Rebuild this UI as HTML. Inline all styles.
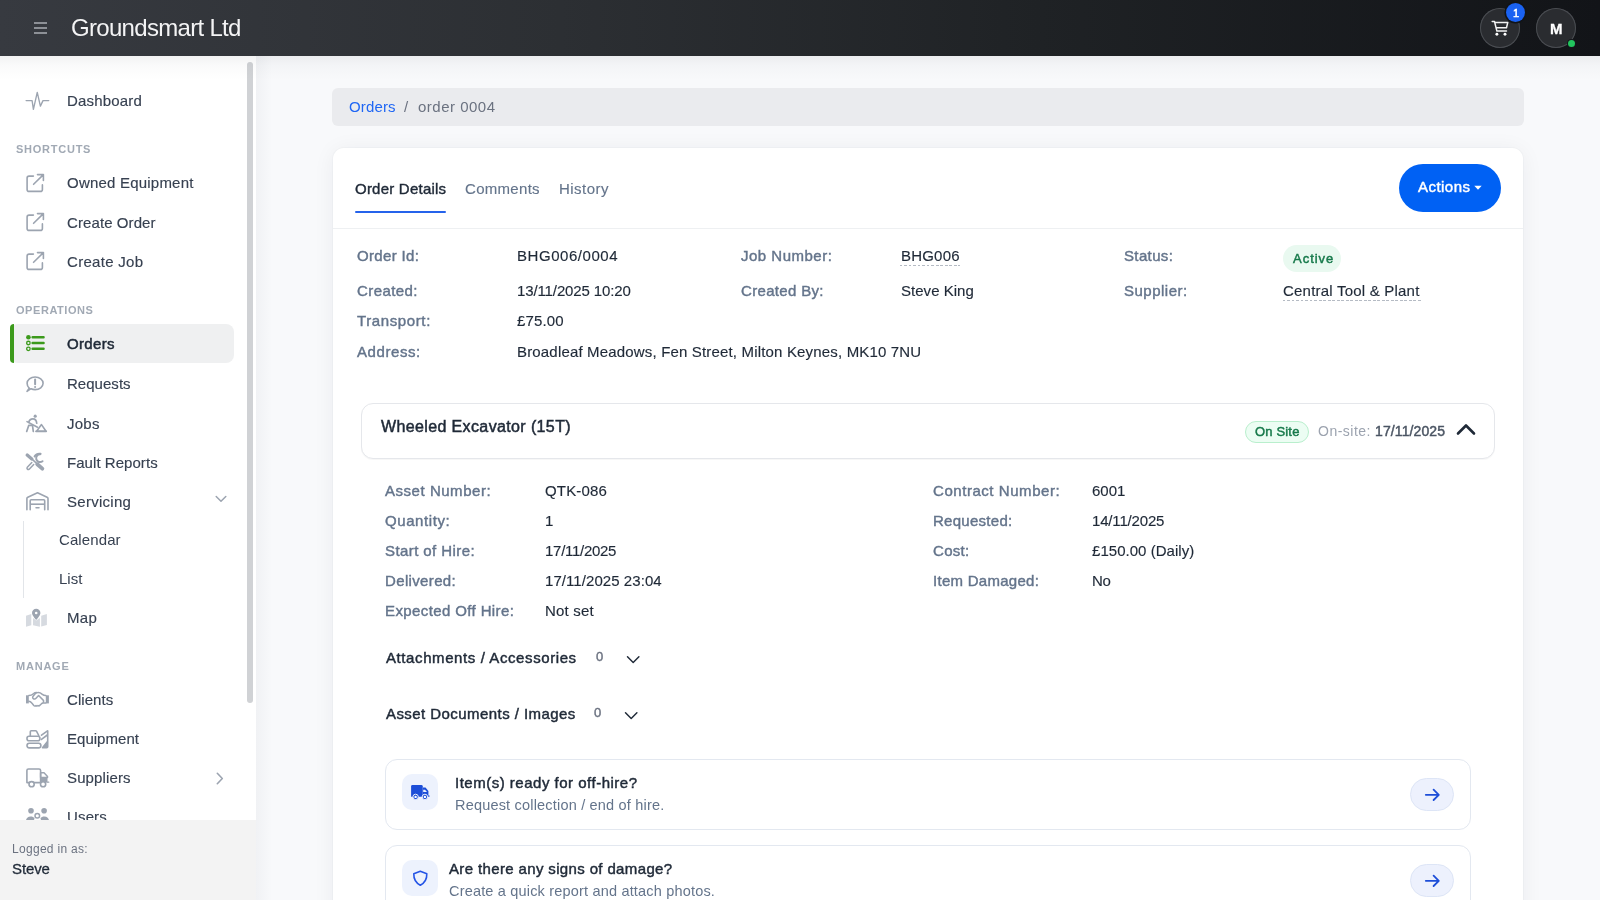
<!DOCTYPE html>
<html><head><meta charset="utf-8"><title>Order 0004</title>
<style>
html,body{margin:0;padding:0;width:1600px;height:900px;overflow:hidden;background:#f8f9fb;font-family:"Liberation Sans",sans-serif;}
.a{position:absolute;}
.t{position:absolute;white-space:nowrap;will-change:transform;}
</style></head><body>
<div class="a" style="left:0px;top:0px;width:1600px;height:56px;background:linear-gradient(90deg,#373a40 0%,#2c2f33 35%,#1f2225 65%,#121418 100%);"></div>
<div class="a" style="left:34px;top:22.4px;width:13px;height:1.3px;background:#8d9096;"></div>
<div class="a" style="left:34px;top:27.4px;width:13px;height:1.3px;background:#8d9096;"></div>
<div class="a" style="left:34px;top:32.4px;width:13px;height:1.3px;background:#8d9096;"></div>
<div class="t" style="left:70.60px;top:13px;font-size:24px;line-height:30px;color:#f4f4f5;letter-spacing:-0.693px;">Groundsmart Ltd</div>
<div class="a" style="left:1480px;top:8px;width:40px;height:40px;border-radius:50%;background:#2a2c30;box-shadow:inset 0 0 0 1px #4a4d52;"></div>
<svg class="a" style="left:1486px;top:14px;" width="28" height="28" viewBox="0 0 28 28" fill="none"><path d="M6.2 7.5H8.5L10.9 17.1H20.5M9 8.4H21.8L20.5 13.7H10" stroke="#f2f2f2" stroke-width="1.5" stroke-linecap="round" stroke-linejoin="round"/><circle cx="10.9" cy="20.2" r="1.45" fill="#fff"/><circle cx="19" cy="20.2" r="1.45" fill="#fff"/></svg>
<div class="a" style="left:1506px;top:2.5px;width:19px;height:19px;border-radius:50%;background:#1a62f2;box-shadow:0 0 0 1.5px #111418;"></div>
<div class="t" style="left:1512.50px;top:6px;font-size:11px;line-height:14px;color:#fff;-webkit-text-stroke:0.5px #fff;">1</div>
<div class="a" style="left:1536px;top:8px;width:40px;height:40px;border-radius:50%;background:#2a2c30;box-shadow:inset 0 0 0 1px #4a4d52;"></div>
<div class="t" style="left:1549.60px;top:19px;font-size:15px;line-height:20px;color:#fff;font-weight:700;-webkit-text-stroke:0.3px #fff;">M</div>
<div class="a" style="left:1567.5px;top:39.5px;width:7px;height:7px;border-radius:50%;background:#22c55e;box-shadow:0 0 0 1px #15181c;"></div>
<div class="a" style="left:0px;top:56px;width:256px;height:764px;background:#fff;"></div>
<div class="a" style="left:256px;top:56px;width:16px;height:844px;background:linear-gradient(90deg,rgba(30,40,60,0.035),rgba(30,40,60,0));"></div>
<div class="a" style="left:247px;top:62px;width:6px;height:641px;border-radius:3px;background:#d0d2d5;"></div>
<div class="a" style="left:10px;top:324px;width:224px;height:39px;border-radius:8px;background:#eff0f1;"></div>
<div class="a" style="left:10px;top:324px;width:4px;height:39px;border-radius:8px 0 0 8px;background:#3c9a1c;"></div>
<div class="a" style="left:23px;top:521px;width:1px;height:77px;background:#e2e5e9;"></div>
<div class="t" style="left:67.40px;top:91px;font-size:15px;line-height:20px;color:#374151;-webkit-text-stroke:0.15px #374151;letter-spacing:0.188px;">Dashboard</div>
<div class="t" style="left:67.40px;top:173px;font-size:15px;line-height:20px;color:#374151;-webkit-text-stroke:0.15px #374151;letter-spacing:0.214px;">Owned Equipment</div>
<div class="t" style="left:67.40px;top:213px;font-size:15px;line-height:20px;color:#374151;-webkit-text-stroke:0.15px #374151;letter-spacing:0.091px;">Create Order</div>
<div class="t" style="left:67.40px;top:252px;font-size:15px;line-height:20px;color:#374151;-webkit-text-stroke:0.15px #374151;letter-spacing:0.300px;">Create Job</div>
<div class="t" style="left:67.40px;top:374px;font-size:15px;line-height:20px;color:#374151;-webkit-text-stroke:0.15px #374151;letter-spacing:0.029px;">Requests</div>
<div class="t" style="left:67.40px;top:414px;font-size:15px;line-height:20px;color:#374151;-webkit-text-stroke:0.15px #374151;letter-spacing:0.233px;">Jobs</div>
<div class="t" style="left:67.40px;top:453px;font-size:15px;line-height:20px;color:#374151;-webkit-text-stroke:0.15px #374151;letter-spacing:0.050px;">Fault Reports</div>
<div class="t" style="left:67.40px;top:492px;font-size:15px;line-height:20px;color:#374151;-webkit-text-stroke:0.15px #374151;letter-spacing:0.275px;">Servicing</div>
<div class="t" style="left:67.40px;top:608px;font-size:15px;line-height:20px;color:#374151;-webkit-text-stroke:0.15px #374151;letter-spacing:0.300px;">Map</div>
<div class="t" style="left:67.40px;top:690px;font-size:15px;line-height:20px;color:#374151;-webkit-text-stroke:0.15px #374151;letter-spacing:0.067px;">Clients</div>
<div class="t" style="left:67.40px;top:729px;font-size:15px;line-height:20px;color:#374151;-webkit-text-stroke:0.15px #374151;letter-spacing:0.025px;">Equipment</div>
<div class="t" style="left:67.40px;top:768px;font-size:15px;line-height:20px;color:#374151;-webkit-text-stroke:0.15px #374151;letter-spacing:0.125px;">Suppliers</div>
<div class="t" style="left:67.40px;top:807px;font-size:15px;line-height:20px;color:#374151;-webkit-text-stroke:0.15px #374151;letter-spacing:0.150px;">Users</div>
<div class="t" style="left:67.40px;top:334px;font-size:15px;line-height:20px;color:#1f2937;-webkit-text-stroke:0.5px #1f2937;letter-spacing:0.340px;">Orders</div>
<div class="t" style="left:59.10px;top:530px;font-size:15px;line-height:20px;color:#374151;letter-spacing:0.100px;">Calendar</div>
<div class="t" style="left:59.10px;top:569px;font-size:15px;line-height:20px;color:#374151;">List</div>
<div class="t" style="left:16.30px;top:142px;font-size:11px;line-height:14px;color:#a1a9b4;font-weight:700;letter-spacing:0.750px;">SHORTCUTS</div>
<div class="t" style="left:16.30px;top:303px;font-size:11px;line-height:14px;color:#a1a9b4;font-weight:700;letter-spacing:0.556px;">OPERATIONS</div>
<div class="t" style="left:16.30px;top:659px;font-size:11px;line-height:14px;color:#a1a9b4;font-weight:700;letter-spacing:0.780px;">MANAGE</div>
<svg class="a" style="left:24px;top:90px;" width="26" height="22" viewBox="0 0 26 22" fill="none"><path d="M2.1 10.6H8.1L9.4 19.3L13.25 2.4L16.4 16.1L19 10.6H24.75" stroke="#9ca4b0" stroke-width="1.35" stroke-linecap="round" stroke-linejoin="round"/></svg>
<svg class="a" style="left:22px;top:170px;" width="26" height="26" viewBox="0 0 26 26" fill="none"><path d="M11.4 6.1H7.1a2 2 0 0 0-2 2V19.4a2 2 0 0 0 2 2H18.4a2 2 0 0 0 2-2V14.9" stroke="#9ca4b0" stroke-width="1.6" stroke-linecap="round" stroke-linejoin="round"/><path d="M11.6 14.3L21.4 4.6M15.5 4.6H21.4V10.5" stroke="#9ca4b0" stroke-width="1.6" stroke-linecap="round" stroke-linejoin="round"/></svg>
<svg class="a" style="left:22px;top:209px;" width="26" height="26" viewBox="0 0 26 26" fill="none"><path d="M11.4 6.1H7.1a2 2 0 0 0-2 2V19.4a2 2 0 0 0 2 2H18.4a2 2 0 0 0 2-2V14.9" stroke="#9ca4b0" stroke-width="1.6" stroke-linecap="round" stroke-linejoin="round"/><path d="M11.6 14.3L21.4 4.6M15.5 4.6H21.4V10.5" stroke="#9ca4b0" stroke-width="1.6" stroke-linecap="round" stroke-linejoin="round"/></svg>
<svg class="a" style="left:22px;top:248px;" width="26" height="26" viewBox="0 0 26 26" fill="none"><path d="M11.4 6.1H7.1a2 2 0 0 0-2 2V19.4a2 2 0 0 0 2 2H18.4a2 2 0 0 0 2-2V14.9" stroke="#9ca4b0" stroke-width="1.6" stroke-linecap="round" stroke-linejoin="round"/><path d="M11.6 14.3L21.4 4.6M15.5 4.6H21.4V10.5" stroke="#9ca4b0" stroke-width="1.6" stroke-linecap="round" stroke-linejoin="round"/></svg>
<svg class="a" style="left:22px;top:330px;" width="26" height="26" viewBox="0 0 26 26" fill="none"><circle cx="6.4" cy="7.3" r="2.3" fill="#3c9a1c"/><circle cx="6.4" cy="13" r="1.75" stroke="#3c9a1c" stroke-width="1.3"/><circle cx="6.4" cy="18.8" r="1.75" stroke="#3c9a1c" stroke-width="1.3"/><path d="M10.6 7.3H21.6M10.6 13H21.6M10.6 18.8H21.6" stroke="#3c9a1c" stroke-width="2.4" stroke-linecap="round"/></svg>
<svg class="a" style="left:22px;top:372px;" width="26" height="24" viewBox="0 0 26 24" fill="none"><path d="M7.2 16.2C5.8 14.9 5.1 13.2 5.1 11.3c0-3.5 3.6-6.3 8-6.3s8 2.8 8 6.3-3.6 6.3-8 6.3c-1.5 0-2.9-.3-4.1-.9L5 19.4z" stroke="#9ca4b0" stroke-width="1.6" stroke-linejoin="round"/><path d="M13.1 7.6V12.2" stroke="#9ca4b0" stroke-width="2" stroke-linecap="round"/><circle cx="13.1" cy="15" r="1.05" fill="#9ca4b0"/></svg>
<svg class="a" style="left:22px;top:410px;" width="26" height="26" viewBox="0 0 26 26" fill="none"><circle cx="13.2" cy="6.2" r="1.6" fill="#9ca4b0"/><path d="M5 11.6L15.5 17.2" stroke="#9ca4b0" stroke-width="1.6" stroke-linecap="round"/><path d="M6.8 12.3C7.3 10 9 8.8 10.9 8.8c2.2 0 3.6 1.6 3.8 4.4" stroke="#9ca4b0" stroke-width="1.7" stroke-linecap="round"/><path d="M4.7 21.5L6.8 15.3H10.5L11.3 21.5" stroke="#9ca4b0" stroke-width="1.7" stroke-linecap="round" stroke-linejoin="round"/><path d="M14.6 21.2L19.5 14.6L24 21.2z" stroke="#9ca4b0" stroke-width="1.6" stroke-linejoin="round"/><path d="M14 21.3H24.2" stroke="#9ca4b0" stroke-width="1.8" stroke-linecap="round"/></svg>
<svg class="a" style="left:22px;top:450px;" width="26" height="24" viewBox="0 0 26 24" fill="none"><path d="M5.2 5L9.8 8.9" stroke="#9ca4b0" stroke-width="3.3" stroke-linecap="round"/><path d="M9.8 8.9L14.6 13.4" stroke="#9ca4b0" stroke-width="1.5" stroke-linecap="round"/><path d="M15.3 14.2L20.3 18.6" stroke="#9ca4b0" stroke-width="3.9" stroke-linecap="round"/><path d="M9.8 12.6L5.3 17.3a1.35 1.35 0 0 0 1.9 1.9L11.7 14.5" stroke="#9ca4b0" stroke-width="1.5" stroke-linecap="round" stroke-linejoin="round"/><path d="M20.5 11.2A3.9 3.9 0 1 1 18.2 4.3" stroke="#9ca4b0" stroke-width="2" stroke-linecap="round"/><path d="M12.6 6.4C14 4.2 16.4 3.4 18.6 3.8" stroke="#9ca4b0" stroke-width="2" stroke-linecap="round"/></svg>
<svg class="a" style="left:22px;top:488px;" width="30" height="26" viewBox="0 0 30 26" fill="none"><path d="M4.9 21.7V10.6a1.5 1.5 0 0 1 .9-1.4L15.5 4.8l9.6 4.4a1.5 1.5 0 0 1 .9 1.4v11.1" stroke="#9ca4b0" stroke-width="1.6" stroke-linecap="round" stroke-linejoin="round"/><path d="M8.2 21.7V12.7a1 1 0 0 1 1-1H21.7a1 1 0 0 1 1 1v9" stroke="#9ca4b0" stroke-width="1.6" stroke-linecap="round" stroke-linejoin="round"/><path d="M8.2 16.2H22.7" stroke="#9ca4b0" stroke-width="1.6"/><path d="M14 19.7H17" stroke="#9ca4b0" stroke-width="1.5" stroke-linecap="round"/></svg>
<svg class="a" style="left:214px;top:493px;" width="14" height="12" viewBox="0 0 14 12" fill="none"><path d="M2.2 3.5L7 8.3L11.8 3.5" stroke="#9ca4b0" stroke-width="1.5" stroke-linecap="round" stroke-linejoin="round"/></svg>
<svg class="a" style="left:22px;top:604px;" width="28" height="26" viewBox="0 0 28 26" fill="none"><path d="M4 11.8L9.3 10V21.2L4 22.7z" fill="#d6dae0"/><path d="M11 14L14.2 16.5L17.9 14V22.7L11 21.2z" fill="#d6dae0"/><path d="M19.2 11.8L24.9 10V20.9L19.2 22.4z" fill="#d6dae0"/><path d="M14.2 4.8a4.2 4.2 0 0 1 4.2 4.2c0 2.6-4.2 6.9-4.2 6.9S10 11.6 10 9a4.2 4.2 0 0 1 4.2-4.2z" fill="#9ca4b0"/><circle cx="14.2" cy="9" r="1.3" fill="#fff"/></svg>
<svg class="a" style="left:22px;top:688px;" width="30" height="22" viewBox="0 0 30 22" fill="none"><path d="M4 7.3H6.8V15.4H4z" fill="#9ca4b0"/><path d="M23.8 7.3H26.9V15.4H23.8z" fill="#9ca4b0"/><path d="M6.8 7.6c1.8 0 3.3-.6 4.6-1.8 1-.9 1.8-1.2 3.2-1.2" stroke="#9ca4b0" stroke-width="1.5" stroke-linecap="round"/><path d="M6.8 13.2c1.3 0 2.1.6 3 1.8l2 2.5c.6.7 1.6.7 2.2.1.5.6 1.5.6 2 0 .6.4 1.4.3 1.9-.3l1.3-1.4c.6-.7 1.3-1 2.2-1h2.4" stroke="#9ca4b0" stroke-width="1.5" stroke-linecap="round" stroke-linejoin="round"/><path d="M23.8 7.6c-1.6 0-2.6-.5-3.8-1.5-1.2-1.1-2.3-1.5-3.8-1.5-1.4 0-2.5.6-3.5 1.7l-1.6 1.9c-.7.8-.6 1.9.2 2.5.8.6 1.9.5 2.5-.3l2.8-2.9 4.6 4.6c.6.6.6 1.5 0 2.1" stroke="#9ca4b0" stroke-width="1.5" stroke-linecap="round" stroke-linejoin="round"/></svg>
<svg class="a" style="left:22px;top:726px;" width="30" height="26" viewBox="0 0 30 26" fill="none"><path d="M8.3 10V5.7a1 1 0 0 1 1-1h4.2c.5 0 .9.3 1.1.7L17 10" stroke="#9ca4b0" stroke-width="1.6" stroke-linejoin="round"/><rect x="5" y="10.2" width="12.9" height="4.6" rx="2" stroke="#9ca4b0" stroke-width="1.6"/><rect x="5" y="17.3" width="13.9" height="4.6" rx="2.3" stroke="#9ca4b0" stroke-width="1.6"/><path d="M19.5 9.2L25.5 4.8M19.5 13.4L25.3 9" stroke="#9ca4b0" stroke-width="1.6" stroke-linecap="round"/><path d="M25.7 4.8V20.8a1 1 0 0 1-1 1H20.5L25.7 15.2" stroke="#9ca4b0" stroke-width="1.6" stroke-linejoin="round"/><path d="M20.5 21.8L25.7 15.2V21.8z" fill="#9ca4b0"/></svg>
<svg class="a" style="left:22px;top:765px;" width="30" height="24" viewBox="0 0 30 24" fill="none"><path d="M18.6 17.6H4.9V5.6a1.6 1.6 0 0 1 1.6-1.6H17a1.6 1.6 0 0 1 1.6 1.6z" stroke="#9ca4b0" stroke-width="1.6" stroke-linejoin="round"/><path d="M18.6 7.8H22l3.5 3.6V12.5H18.6z" stroke="#9ca4b0" stroke-width="1.5" stroke-linejoin="round"/><path d="M18.6 12.5H25.5V17.6H18.6z" fill="#9ca4b0"/><path d="M25.5 17.2H26.8" stroke="#9ca4b0" stroke-width="1.2" stroke-linecap="round"/><circle cx="9.6" cy="19.2" r="2.6" fill="#fff" stroke="#9ca4b0" stroke-width="1.6"/><circle cx="21.1" cy="19.2" r="2.6" fill="#fff" stroke="#9ca4b0" stroke-width="1.6"/></svg>
<svg class="a" style="left:212px;top:771px;" width="12" height="15" viewBox="0 0 12 15" fill="none"><path d="M5.3 2.3L10.3 7.5L5.3 12.7" stroke="#9ca4b0" stroke-width="1.6" stroke-linecap="round" stroke-linejoin="round"/></svg>
<svg class="a" style="left:22px;top:805px;" width="30" height="18" viewBox="0 0 30 18" fill="none"><circle cx="9" cy="5.7" r="2.8" fill="#9ca4b0"/><circle cx="22.1" cy="5.7" r="2.8" fill="#9ca4b0"/><circle cx="15.3" cy="10.8" r="2.3" stroke="#9ca4b0" stroke-width="1.5"/><path d="M4 15.5c0-2.3 2-4 4.7-4 1.7 0 3 .6 3.9 1.6-.3.6-.5 1.3-.5 2.1V16H4z" fill="#9ca4b0"/><path d="M27 15.5c0-2.3-2-4-4.7-4-1.7 0-3 .6-3.9 1.6.3.6.5 1.3.5 2.1V16H27z" fill="#9ca4b0"/></svg>
<div class="a" style="left:0px;top:820px;width:256px;height:80px;background:#f3f3f3;"></div>
<div class="t" style="left:12.40px;top:841px;font-size:12px;line-height:16px;color:#6b7280;letter-spacing:0.300px;">Logged in as:</div>
<div class="t" style="left:12.40px;top:859px;font-size:15px;line-height:20px;color:#1f2937;-webkit-text-stroke:0.3px #1f2937;letter-spacing:-0.100px;">Steve</div>
<div class="a" style="left:332px;top:88px;width:1192px;height:38px;border-radius:6px;background:#eaebee;"></div>
<div class="t" style="left:348.50px;top:97px;font-size:15px;line-height:20px;color:#1f66f4;letter-spacing:0.150px;">Orders</div>
<div class="t" style="left:404.40px;top:97px;font-size:15px;line-height:20px;color:#6b7280;">/</div>
<div class="t" style="left:417.50px;top:97px;font-size:15px;line-height:20px;color:#6b7280;letter-spacing:0.500px;">order 0004</div>
<div class="a" style="left:333px;top:148px;width:1190px;height:820px;border-radius:11px;background:#fff;box-shadow:0 0 0 1px rgba(20,30,50,0.02),0 2px 22px rgba(20,30,50,0.06);"></div>
<div class="t" style="left:355.20px;top:179px;font-size:15px;line-height:20px;color:#1f2937;-webkit-text-stroke:0.4px #1f2937;letter-spacing:0.225px;">Order Details</div>
<div class="t" style="left:464.80px;top:179px;font-size:15px;line-height:20px;color:#64748b;letter-spacing:0.300px;-webkit-text-stroke:0.15px #64748b;">Comments</div>
<div class="t" style="left:558.80px;top:179px;font-size:15px;line-height:20px;color:#64748b;letter-spacing:0.467px;-webkit-text-stroke:0.15px #64748b;">History</div>
<div class="a" style="left:355px;top:210.5px;width:91px;height:2.5px;background:#2563eb;border-radius:1px;"></div>
<div class="a" style="left:333px;top:228px;width:1190px;height:1px;background:#eef0f2;"></div>
<div class="a" style="left:1399px;top:164px;width:102px;height:48px;border-radius:24px;background:#0061f4;"></div>
<div class="t" style="left:1418.30px;top:177px;font-size:15px;line-height:20px;color:#fff;-webkit-text-stroke:0.45px #fff;letter-spacing:0.458px;">Actions</div>
<svg class="a" style="left:1474px;top:185px;" width="8" height="6" viewBox="0 0 8 6" fill="none"><path d="M0.3 0.8H7.7L4 4.8z" fill="#fff"/></svg>
<div class="t" style="left:357.00px;top:246px;font-size:15px;line-height:20px;color:#64748b;-webkit-text-stroke:0.42px #64748b;letter-spacing:0.344px;">Order Id:</div>
<div class="t" style="left:357.00px;top:281px;font-size:15px;line-height:20px;color:#64748b;-webkit-text-stroke:0.42px #64748b;letter-spacing:0.429px;">Created:</div>
<div class="t" style="left:357.00px;top:311px;font-size:15px;line-height:20px;color:#64748b;-webkit-text-stroke:0.42px #64748b;letter-spacing:0.611px;">Transport:</div>
<div class="t" style="left:357.00px;top:342px;font-size:15px;line-height:20px;color:#64748b;-webkit-text-stroke:0.42px #64748b;letter-spacing:0.571px;">Address:</div>
<div class="t" style="left:740.75px;top:246px;font-size:15px;line-height:20px;color:#64748b;-webkit-text-stroke:0.42px #64748b;letter-spacing:0.500px;">Job Number:</div>
<div class="t" style="left:740.75px;top:281px;font-size:15px;line-height:20px;color:#64748b;-webkit-text-stroke:0.42px #64748b;letter-spacing:0.325px;">Created By:</div>
<div class="t" style="left:1124.20px;top:246px;font-size:15px;line-height:20px;color:#64748b;-webkit-text-stroke:0.42px #64748b;letter-spacing:0.367px;">Status:</div>
<div class="t" style="left:1124.20px;top:281px;font-size:15px;line-height:20px;color:#64748b;-webkit-text-stroke:0.42px #64748b;letter-spacing:0.500px;">Supplier:</div>
<div class="t" style="left:517.00px;top:246px;font-size:15px;line-height:20px;color:#1f2937;-webkit-text-stroke:0.15px #1f2937;letter-spacing:0.550px;">BHG006/0004</div>
<div class="t" style="left:517.00px;top:281px;font-size:15px;line-height:20px;color:#1f2937;-webkit-text-stroke:0.15px #1f2937;letter-spacing:-0.117px;">13/11/2025 10:20</div>
<div class="t" style="left:517.00px;top:311px;font-size:15px;line-height:20px;color:#1f2937;-webkit-text-stroke:0.15px #1f2937;letter-spacing:0.150px;">£75.00</div>
<div class="t" style="left:517.00px;top:342px;font-size:15px;line-height:20px;color:#1f2937;-webkit-text-stroke:0.15px #1f2937;letter-spacing:0.170px;">Broadleaf Meadows, Fen Street, Milton Keynes, MK10 7NU</div>
<div class="t" style="left:900.50px;top:246px;font-size:15px;line-height:20px;color:#1f2937;-webkit-text-stroke:0.15px #1f2937;letter-spacing:0.200px;">BHG006</div>
<div class="t" style="left:900.50px;top:281px;font-size:15px;line-height:20px;color:#1f2937;-webkit-text-stroke:0.15px #1f2937;letter-spacing:0.028px;">Steve King</div>
<div class="t" style="left:1283.40px;top:281px;font-size:15px;line-height:20px;color:#1f2937;-webkit-text-stroke:0.15px #1f2937;letter-spacing:0.211px;">Central Tool &amp; Plant</div>
<div class="a" style="left:900px;top:265px;width:60px;height:1px;background:repeating-linear-gradient(90deg,#b5bbc4 0 2.5px,transparent 2.5px 4.5px);"></div>
<div class="a" style="left:1283px;top:300px;width:138px;height:1px;background:repeating-linear-gradient(90deg,#b5bbc4 0 2.5px,transparent 2.5px 4.5px);"></div>
<div class="a" style="left:1283px;top:245px;width:58px;height:27px;border-radius:14px;background:#e9f9f0;"></div>
<div class="t" style="left:1292.50px;top:250px;font-size:13px;line-height:18px;color:#16794a;-webkit-text-stroke:0.45px #16794a;letter-spacing:0.980px;">Active</div>
<div class="a" style="left:361px;top:403px;width:1134px;height:56px;border-radius:12px;background:#fff;border:1px solid #e5e7eb;box-sizing:border-box;box-shadow:0 1px 1px rgba(0,0,0,0.035);"></div>
<div class="t" style="left:380.50px;top:417px;font-size:16px;line-height:20px;color:#1f2937;-webkit-text-stroke:0.5px #1f2937;letter-spacing:0.373px;">Wheeled Excavator (15T)</div>
<div class="a" style="left:1245px;top:421px;width:64px;height:22px;border-radius:11px;background:#ecfdf3;border:1px solid #b9efcd;box-sizing:border-box;"></div>
<div class="t" style="left:1255.00px;top:423px;font-size:13px;line-height:18px;color:#16794a;-webkit-text-stroke:0.45px #16794a;letter-spacing:0.167px;">On Site</div>
<div class="t" style="left:1317.60px;top:421px;font-size:14px;line-height:20px;color:#9ca3af;letter-spacing:0.486px;">On-site:</div>
<div class="t" style="left:1375.40px;top:421px;font-size:14px;line-height:20px;color:#4b5563;-webkit-text-stroke:0.45px #4b5563;letter-spacing:0.111px;">17/11/2025</div>
<svg class="a" style="left:1454px;top:420px;" width="24" height="18" viewBox="0 0 24 18" fill="none"><path d="M4 13.5L12 5.5L20 13.5" stroke="#1f2937" stroke-width="2.6" stroke-linecap="round" stroke-linejoin="round"/></svg>
<div class="t" style="left:385.30px;top:481px;font-size:15px;line-height:20px;color:#64748b;-webkit-text-stroke:0.42px #64748b;letter-spacing:0.533px;">Asset Number:</div>
<div class="t" style="left:544.80px;top:481px;font-size:15px;line-height:20px;color:#1f2937;-webkit-text-stroke:0.15px #1f2937;letter-spacing:0.150px;">QTK-086</div>
<div class="t" style="left:385.30px;top:511px;font-size:15px;line-height:20px;color:#64748b;-webkit-text-stroke:0.42px #64748b;letter-spacing:0.575px;">Quantity:</div>
<div class="t" style="left:544.80px;top:511px;font-size:15px;line-height:20px;color:#1f2937;-webkit-text-stroke:0.15px #1f2937;">1</div>
<div class="t" style="left:385.30px;top:541px;font-size:15px;line-height:20px;color:#64748b;-webkit-text-stroke:0.42px #64748b;letter-spacing:0.415px;">Start of Hire:</div>
<div class="t" style="left:544.80px;top:541px;font-size:15px;line-height:20px;color:#1f2937;-webkit-text-stroke:0.15px #1f2937;letter-spacing:-0.278px;">17/11/2025</div>
<div class="t" style="left:385.30px;top:571px;font-size:15px;line-height:20px;color:#64748b;-webkit-text-stroke:0.42px #64748b;letter-spacing:0.356px;">Delivered:</div>
<div class="t" style="left:544.80px;top:571px;font-size:15px;line-height:20px;color:#1f2937;-webkit-text-stroke:0.15px #1f2937;letter-spacing:0.067px;">17/11/2025 23:04</div>
<div class="t" style="left:385.30px;top:601px;font-size:15px;line-height:20px;color:#64748b;-webkit-text-stroke:0.42px #64748b;letter-spacing:0.388px;">Expected Off Hire:</div>
<div class="t" style="left:544.80px;top:601px;font-size:15px;line-height:20px;color:#1f2937;-webkit-text-stroke:0.15px #1f2937;letter-spacing:0.183px;">Not set</div>
<div class="t" style="left:932.50px;top:481px;font-size:15px;line-height:20px;color:#64748b;-webkit-text-stroke:0.42px #64748b;letter-spacing:0.550px;">Contract Number:</div>
<div class="t" style="left:1092.00px;top:481px;font-size:15px;line-height:20px;color:#1f2937;-webkit-text-stroke:0.15px #1f2937;">6001</div>
<div class="t" style="left:932.50px;top:511px;font-size:15px;line-height:20px;color:#64748b;-webkit-text-stroke:0.42px #64748b;letter-spacing:0.278px;">Requested:</div>
<div class="t" style="left:1092.00px;top:511px;font-size:15px;line-height:20px;color:#1f2937;-webkit-text-stroke:0.15px #1f2937;letter-spacing:-0.167px;">14/11/2025</div>
<div class="t" style="left:932.50px;top:541px;font-size:15px;line-height:20px;color:#64748b;-webkit-text-stroke:0.42px #64748b;letter-spacing:0.312px;">Cost:</div>
<div class="t" style="left:1092.00px;top:541px;font-size:15px;line-height:20px;color:#1f2937;-webkit-text-stroke:0.15px #1f2937;letter-spacing:0.036px;">£150.00 (Daily)</div>
<div class="t" style="left:932.50px;top:571px;font-size:15px;line-height:20px;color:#64748b;-webkit-text-stroke:0.42px #64748b;letter-spacing:0.271px;">Item Damaged:</div>
<div class="t" style="left:1092.00px;top:571px;font-size:15px;line-height:20px;color:#1f2937;-webkit-text-stroke:0.15px #1f2937;letter-spacing:-0.250px;">No</div>
<div class="t" style="left:386.40px;top:648px;font-size:15px;line-height:20px;color:#1f2937;-webkit-text-stroke:0.45px #1f2937;letter-spacing:0.592px;">Attachments / Accessories</div>
<div class="t" style="left:595.50px;top:648px;font-size:13px;line-height:18px;color:#6b7280;-webkit-text-stroke:0.4px #6b7280;">0</div>
<svg class="a" style="left:622px;top:651px;" width="22" height="16" viewBox="0 0 22 16" fill="none"><path d="M5.5 5.8L11.2 11.5L16.9 5.8" stroke="#1f2937" stroke-width="1.45" stroke-linecap="round" stroke-linejoin="round"/></svg>
<div class="t" style="left:386.40px;top:704px;font-size:15px;line-height:20px;color:#1f2937;-webkit-text-stroke:0.45px #1f2937;letter-spacing:0.435px;">Asset Documents / Images</div>
<div class="t" style="left:594.00px;top:704px;font-size:13px;line-height:18px;color:#6b7280;-webkit-text-stroke:0.4px #6b7280;">0</div>
<svg class="a" style="left:620px;top:707px;" width="22" height="16" viewBox="0 0 22 16" fill="none"><path d="M5.5 5.8L11.2 11.5L16.9 5.8" stroke="#1f2937" stroke-width="1.45" stroke-linecap="round" stroke-linejoin="round"/></svg>
<div class="a" style="left:385px;top:759px;width:1086px;height:71px;border-radius:12px;background:#fff;border:1px solid #e3e8f0;box-sizing:border-box;"></div>
<div class="a" style="left:402px;top:774px;width:36px;height:36px;border-radius:10px;background:#edf2fd;"></div>
<svg class="a" style="left:408px;top:782px;" width="24" height="20" viewBox="0 0 24 20" fill="none"><path d="M3.1 4.2a1.3 1.3 0 0 1 1.3-1.3H13.4a1.3 1.3 0 0 1 1.3 1.3V14.8H3.1z" fill="#1d4ed8"/><path d="M14.7 5.6H17.5L20.4 8.9V14.8H14.7z" fill="#1d4ed8"/><path d="M15.2 7.8H17L19 10H15.2z" fill="#edf2fd"/><path d="M20.4 14H21.2" stroke="#1d4ed8" stroke-width="1.2" stroke-linecap="round"/><circle cx="7.6" cy="14.9" r="2.7" fill="#1d4ed8" stroke="#edf2fd" stroke-width="1"/><circle cx="16.9" cy="14.9" r="2.7" fill="#1d4ed8" stroke="#edf2fd" stroke-width="1"/><circle cx="7.6" cy="14.9" r="1.2" fill="#fff"/><circle cx="16.9" cy="14.9" r="1.2" fill="#fff"/></svg>
<div class="t" style="left:454.50px;top:773px;font-size:15px;line-height:20px;color:#1f2937;-webkit-text-stroke:0.45px #1f2937;letter-spacing:0.504px;">Item(s) ready for off-hire?</div>
<div class="t" style="left:454.50px;top:795px;font-size:14.5px;line-height:20px;color:#64748b;letter-spacing:0.191px;">Request collection / end of hire.</div>
<div class="a" style="left:1410px;top:778px;width:44px;height:33px;border-radius:17px;background:#edf1fd;border:1px solid #dde5f6;box-sizing:border-box;"></div>
<svg class="a" style="left:1420px;top:784px;" width="24" height="22" viewBox="0 0 24 22" fill="none"><path d="M5.8 10.8H18.6M13.6 5.6L18.8 10.8L13.6 16" stroke="#1d4ed8" stroke-width="1.8" stroke-linecap="round" stroke-linejoin="round"/></svg>
<div class="a" style="left:385px;top:845px;width:1086px;height:71px;border-radius:12px;background:#fff;border:1px solid #e3e8f0;box-sizing:border-box;"></div>
<div class="a" style="left:402px;top:860px;width:36px;height:36px;border-radius:10px;background:#edf2fd;"></div>
<svg class="a" style="left:408px;top:866px;" width="24" height="24" viewBox="0 0 24 24" fill="none"><path d="M12.3 5.3L18.8 7.7C19 13 16.9 16.7 12.3 19.2 7.7 16.7 5.6 13 5.8 7.7z" stroke="#2454e6" stroke-width="1.6" stroke-linejoin="round"/></svg>
<div class="t" style="left:448.50px;top:859px;font-size:15px;line-height:20px;color:#1f2937;-webkit-text-stroke:0.45px #1f2937;letter-spacing:0.362px;">Are there any signs of damage?</div>
<div class="t" style="left:448.50px;top:881px;font-size:14.5px;line-height:20px;color:#64748b;letter-spacing:0.182px;">Create a quick report and attach photos.</div>
<div class="a" style="left:1410px;top:864px;width:44px;height:33px;border-radius:17px;background:#edf1fd;border:1px solid #dde5f6;box-sizing:border-box;"></div>
<svg class="a" style="left:1420px;top:870px;" width="24" height="22" viewBox="0 0 24 22" fill="none"><path d="M5.8 10.8H18.6M13.6 5.6L18.8 10.8L13.6 16" stroke="#1d4ed8" stroke-width="1.8" stroke-linecap="round" stroke-linejoin="round"/></svg>
<div class="a" style="left:0px;top:56px;width:1600px;height:24px;background:linear-gradient(180deg,rgba(20,25,35,0.055),rgba(20,25,35,0.02) 40%,rgba(20,25,35,0));"></div>
</body></html>
